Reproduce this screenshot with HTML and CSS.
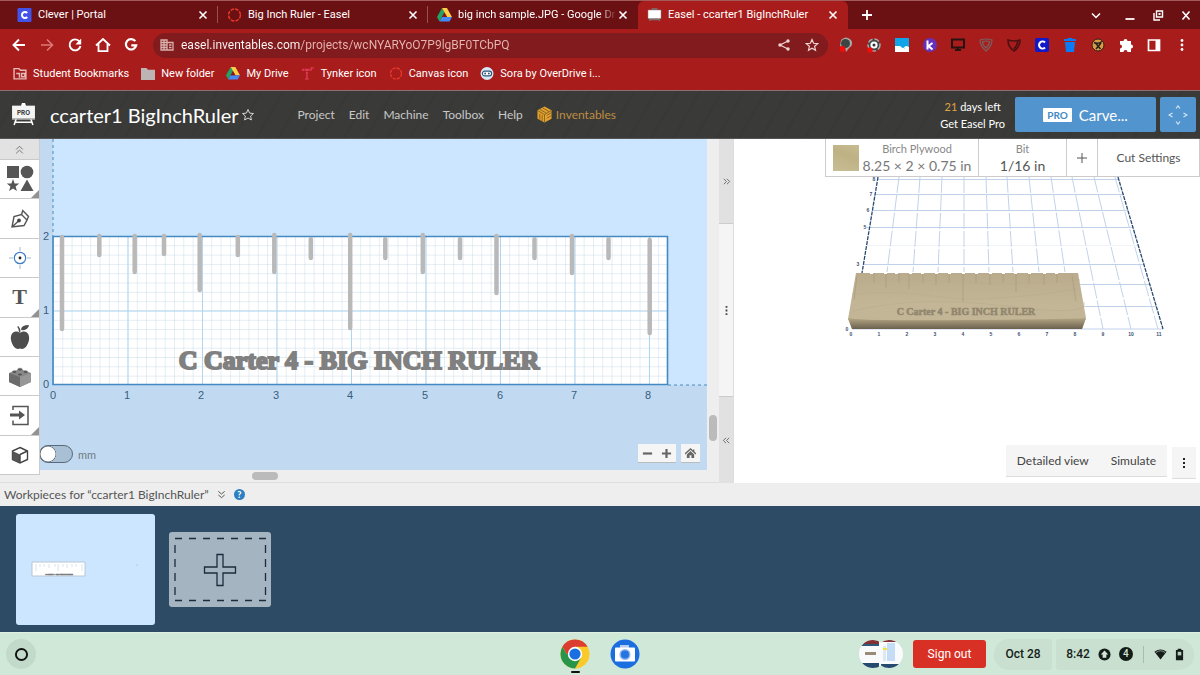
FILE: index.html
```html
<!DOCTYPE html>
<html lang="en">
<head>
<meta charset="utf-8">
<meta name="viewport" content="width=device-width, initial-scale=1">
<title>Easel - ccarter1 BigInchRuler</title>
<link rel="stylesheet" href="styles.css">
</head>
<body>
<svg class="defs" width="0" height="0" aria-hidden="true">
  <symbol id="x" viewBox="0 0 10 10"><path d="M1.5 1.5l7 7M8.5 1.5l-7 7" fill="none" stroke="currentColor" stroke-width="1.6"/></symbol>
  <symbol id="drive" viewBox="0 0 14 13"><path d="M4.700 0L0 8.300l2.300 4.200L7 4z" fill="#1fa463"/><path d="M4.700 0h4.600L14 8.300H9.400z" fill="#ffcf48"/><path d="M2.300 12.500l2.400-4.200H14l-2.300 4.200z" fill="#4688f4"/><path d="M7 4.300L9.300 8.300H4.700z" fill="#8e1518"/></symbol>
  <symbol id="ring" viewBox="0 0 16 16"><circle cx="8" cy="8" r="6.800" fill="none" stroke="#e8392b" stroke-width="1.700" stroke-dasharray="4 1.340"/></symbol>
</svg>

<header class="browser">
  <nav class="tabs" aria-label="Tabs">
    <div class="tab"><svg class="fav" viewBox="0 0 14 14"><rect width="14" height="14" rx="1" fill="#4353e8"/><path d="M9.700 5A3 3 0 1 0 9.700 9" fill="none" stroke="#fff" stroke-width="2"/></svg><span class="tab-title">Clever | Portal</span><button class="close" aria-label="Close tab"><svg><use href="#x"/></svg></button></div>
    <div class="tab"><svg class="fav"><use href="#ring"/></svg><span class="tab-title">Big Inch Ruler - Easel</span><button class="close" aria-label="Close tab"><svg><use href="#x"/></svg></button></div>
    <div class="tab"><svg class="fav"><use href="#drive"/></svg><span class="tab-title fade">big inch sample.JPG - Google Dr</span><button class="close" aria-label="Close tab"><svg><use href="#x"/></svg></button></div>
    <div class="tab active"><svg class="fav" viewBox="0 0 14 14"><path d="M3 10l-1 3M11 10l1 3M2.500 11.500h9M4 1h6" stroke="#777" stroke-width="1.300"/><rect x=".5" y="2" width="13" height="8.500" fill="#fff" stroke="#888" stroke-width=".5"/></svg><span class="tab-title">Easel - ccarter1 BigInchRuler</span><button class="close" aria-label="Close tab"><svg><use href="#x"/></svg></button></div>
    <button class="new-tab" aria-label="New tab"><svg viewBox="0 0 12 12"><path d="M6 1v10M1 6h10" stroke="#fff" stroke-width="1.800"/></svg></button>
    <div class="window-controls">
      <button class="ib search-tabs" aria-label="Search tabs"><svg viewBox="0 0 14 14"><path d="M3 5.500l4 4 4-4" fill="none" stroke="#fff" stroke-width="1.500"/></svg></button>
      <button class="ib" aria-label="Minimize"><svg viewBox="0 0 14 14"><path d="M2.500 11h9" stroke="#fff" stroke-width="1.800"/></svg></button>
      <button class="ib" aria-label="Restore"><svg viewBox="0 0 14 14"><path d="M5.500 3h6v6h-6zM3 5v7h6" fill="none" stroke="#fff" stroke-width="1.400"/><path d="M7.500 5h2v2h-2z" fill="#fff"/></svg></button>
      <button class="ib" aria-label="Close window"><svg viewBox="0 0 14 14"><path d="M3.500 3.500l7 8M10.500 3.500l-7 8" stroke="#fff" stroke-width="1.600"/></svg></button>
    </div>
  </nav>

  <div class="toolbar">
    <button class="ib" aria-label="Back"><svg viewBox="0 0 16 16"><path d="M14 8H3M8 2.500L2.500 8 8 13.500" fill="none" stroke="#fff" stroke-width="1.900"/></svg></button>
    <button class="ib" aria-label="Forward"><svg viewBox="0 0 16 16"><path d="M2 8h11M8 2.500L13.500 8 8 13.500" fill="none" stroke="#dc7974" stroke-width="1.600"/></svg></button>
    <button class="ib" aria-label="Reload"><svg viewBox="0 0 16 16"><path d="M12.500 4.500A5.500 5.500 0 1 0 13.500 9" fill="none" stroke="#fff" stroke-width="1.900"/><path d="M14.200 1.500v6H8.400z" fill="#fff"/></svg></button>
    <button class="ib" aria-label="Home"><svg viewBox="0 0 16 16"><path d="M1 8.500L8 2l7 6.500M3.500 7v7.200h9V7" fill="none" stroke="#fff" stroke-width="1.800"/></svg></button>
    <button class="ib" aria-label="Google"><svg viewBox="0 0 16 16"><path d="M12.300 4.200A5.200 5.200 0 1 0 13.200 8.300H8.300" fill="none" stroke="#fff" stroke-width="2.200"/></svg></button>
    <form class="omnibox">
      <svg viewBox="0 0 14 12"><path d="M1 1h6v10H1zM7 3.500h6V11H7M1 3.500h6M1 6h6M1 8.500h6M4 1v10M9 6h2.500M9 8.500h2.500" fill="none" stroke="#d9b2ae" stroke-width="1.300"/></svg>
      <input aria-label="Address" value="easel.inventables.com/projects/wcNYARYoO7P9lgBF0TCbPQ">
      <button type="button" class="ib" aria-label="Share"><svg viewBox="0 0 14 14"><path d="M11 3L3 7l8 4" fill="none" stroke="#f0d4d1" stroke-width="1.200"/><g fill="#f0d4d1"><circle cx="11" cy="3" r="1.700"/><circle cx="3" cy="7" r="1.700"/><circle cx="11" cy="11" r="1.700"/></g></svg></button>
      <button type="button" class="ib" aria-label="Bookmark"><svg viewBox="0 0 14 14"><path d="M7 1.500l1.600 3.800 4 .3-3 2.700.9 4L7 10.200l-3.500 2.100.9-4-3-2.700 4-.3z" fill="none" stroke="#f0d4d1" stroke-width="1.200"/></svg></button>
    </form>
    <div class="extensions">
      <button class="ib" aria-label="Extension"><svg viewBox="0 0 16 16"><path d="M3 3q5-5 10 0 3 5-2 8l-3 4-1-4-5-2z" fill="#aaa"/><circle cx="7.500" cy="6.500" r="4.500" fill="#3e4441"/><circle cx="4.500" cy="12" r="3" fill="#f40a0a"/></svg></button>
      <button class="ib" aria-label="Extension"><svg viewBox="0 0 16 16"><circle cx="8" cy="8" r="6" fill="#444" stroke="#aaa" stroke-width="1.500" stroke-dasharray="5 2"/><circle cx="8" cy="8" r="3.600" fill="#fff"/><circle cx="8" cy="8" r="1.500" fill="#333"/><circle cx="4" cy="13" r="2.700" fill="#f40a0a"/></svg></button>
      <button class="ib" aria-label="Extension"><svg viewBox="0 0 16 16"><path d="M1 1h14v14H1z" fill="#fff"/><path d="M1 1h14v9l-3-1-2 3-4-3H1z" fill="#10a4e8"/><path d="M9 12q1-3 5-2" fill="none" stroke="#fff"/></svg></button>
      <button class="ib" aria-label="Kami"><svg viewBox="0 0 16 16"><circle cx="8" cy="8" r="7" fill="#6631b8"/><path d="M5.500 3.500v9M10.500 6L6.500 9l4 3.500" fill="none" stroke="#fff" stroke-width="2"/></svg></button>
      <button class="ib" aria-label="Screen"><svg viewBox="0 0 16 16"><path d="M2 2.500h12v8H2zM8 10v3M5 13h6" fill="none" stroke="#281313" stroke-width="2"/></svg></button>
      <button class="ib" aria-label="Extension"><svg viewBox="0 0 16 16"><path d="M2 3q6-2 12 0 0 6-6 11Q2 9 2 3zM4.500 4.500q3.500-1 7 0 0 3-3.500 6.500Q4.500 8 4.500 4.500z" fill="none" stroke="#79605f" stroke-width="1.200"/></svg></button>
      <button class="ib" aria-label="Extension"><svg viewBox="0 0 16 16"><path d="M2 3q6 2 12 0 0 7-6 11Q2 10 2 3zM12 4q-1 5-4 8" fill="none" stroke="#4f1011" stroke-width="1.600"/></svg></button>
      <button class="ib" aria-label="Clever"><svg viewBox="0 0 16 16"><rect x="1" y="1" width="14" height="14" rx="2" fill="#1018c9"/><path d="M11 5.500a3.500 3.500 0 1 0 0 5" fill="none" stroke="#fff" stroke-width="2"/></svg></button>
      <button class="ib" aria-label="Trash"><svg viewBox="0 0 16 16"><path d="M2 2h3l1-1h4l1 1h3v2H2zM3 5h10l-1 10H4z" fill="#0b7bf5"/></svg></button>
      <button class="ib" aria-label="Extension"><svg viewBox="0 0 16 16"><circle cx="8" cy="8" r="6" fill="#d99b43" stroke="#30221b" stroke-width="1"/><path d="M5.500 6l5 6M11 6l-5 6M4 5.500q4 2 8-1" fill="none" stroke="#24201e" stroke-width="1.500"/></svg></button>
      <button class="ib" aria-label="Extensions"><svg viewBox="0 0 16 16"><path d="M2 4h3.500a2 2 0 1 1 4 0H13v3.500a2 2 0 1 1 0 4V15H9.500a2 2 0 0 0-4 0H2v-3.500a2 2 0 0 0 0-4z" fill="#fff"/></svg></button>
      <button class="ib" aria-label="Side panel"><svg viewBox="0 0 16 16"><path d="M2.500 3h11v10.500h-11z" fill="none" stroke="#fff" stroke-width="1.700"/><path d="M9.500 3h4v10h-4z" fill="#fff"/></svg></button>
      <button class="ib" aria-label="Browser menu"><svg viewBox="0 0 16 16" fill="#fff"><circle cx="8" cy="3.500" r="1.400"/><circle cx="8" cy="8" r="1.400"/><circle cx="8" cy="12.500" r="1.400"/></svg></button>
    </div>
  </div>

  <nav class="bookmarks" aria-label="Bookmarks">
    <a href="#"><svg viewBox="0 0 13 12"><path d="M1 1.500h4.500L7 3h5v8H1zM3 6h3v4M8 6h3v3H8z" fill="none" stroke="#e2bcb9" stroke-width="1.300"/></svg>Student Bookmarks</a>
    <a href="#"><svg viewBox="0 0 13 12"><path d="M0 1h5l1.500 1.500H13V12H0z" fill="#bdb5b4"/></svg>New folder</a>
    <a href="#"><svg><use href="#drive"/></svg>My Drive</a>
    <a href="#"><svg viewBox="0 0 13 12"><path d="M1 2.500h9M5.500 2v9M4 11h3M9 1h3" fill="none" stroke="#e13a57" stroke-width="1.700" stroke-dasharray="2 .5"/></svg>Tynker icon</a>
    <a href="#"><svg><use href="#ring"/></svg>Canvas icon</a>
    <a href="#"><svg viewBox="0 0 14 14"><circle cx="7" cy="7" r="7" fill="#d4e8f7"/><rect x="2" y="4.500" width="10" height="5" rx="2.500" fill="#fff" stroke="#315578" stroke-width="1.200"/><circle cx="5" cy="7" r="1" fill="#315578"/><circle cx="9" cy="7" r="1" fill="#315578"/></svg>Sora by OverDrive i...</a>
  </nav>
</header>

<header class="app-header">
  <svg class="logo" viewBox="0 0 24 24"><path d="M12 1v4M5 16l-2 6M19 16l2 6M4 19.500h16" stroke="#fff" stroke-width="1.500"/><path d="M10.500 1h3l1 3h-5z" fill="#fff"/><path d="M1 3.500h22V16H1z" fill="#f4f4f4"/><path d="M1 16h22v1H1z" fill="#bbb"/><text x="12" y="12" text-anchor="middle">PRO</text></svg>
  <h1>ccarter1 BigInchRuler</h1>
  <button class="star" aria-label="Favorite"><svg viewBox="0 0 14 14"><path d="M7 1.500l1.600 3.600 3.900.4-2.900 2.600.8 3.900L7 10l-3.400 2 .8-3.900-2.900-2.600 3.900-.4z" fill="none" stroke="#d5d5d5"/></svg></button>
  <nav class="menu" aria-label="Main">
    <button>Project</button><button>Edit</button><button>Machine</button><button>Toolbox</button><button>Help</button>
    <a href="#"><svg viewBox="0 0 16 18"><path d="M8 .5l7.500 4v9L8 17.500.5 13.500v-9z" fill="#e5a22b"/><path d="M8 9v8M8 9l7-4M8 9L1 5M3 3.500l7 4M6 2l7 4M3 8v6.500M5.500 9.500V16M10.500 10l5-3M10.500 13l5-3" fill="none" stroke="#6c5327" stroke-width=".8"/></svg>Inventables</a>
  </nav>
  <div class="trial"><span><b>21</b> days left</span><a href="#">Get Easel Pro</a></div>
  <button class="carve"><span class="pro">PRO</span>Carve...</button>
  <button class="jog" aria-label="Jog machine"><svg viewBox="0 0 20 20"><path d="M8 3.500L10 1l2 2.500M8 16.500l2 2.500 2-2.500M4.500 8L1 10l3.500 2M15.500 8l3.500 2-3.500 2" fill="none" stroke="#d5e9f8" stroke-width="1.100"/></svg></button>
</header>

<main class="workspace">
  <div class="tools">
    <button class="collapse" aria-label="Collapse tools"><svg viewBox="0 0 10 10"><path d="M2 5l3-3 3 3M2 8.500l3-3 3 3" fill="none" stroke="#666" stroke-width=".8"/></svg></button>
    <button class="more" aria-label="Shapes"><svg viewBox="0 0 28 28" fill="#565656"><path d="M1 1h12v12H1z"/><circle cx="21" cy="7" r="6.300"/><path d="M7 14l1.600 4.400 4.600.1-3.600 3 1.300 4.500L7 23.400 3.100 26l1.300-4.500-3.600-3 4.600-.1zM21 14.500L27.500 26h-13z"/></svg></button>
    <button aria-label="Pen"><svg viewBox="0 0 28 28"><path d="M6 22l2-10.500 7.500-2 5.500 5.500-3 5.500zM15.500 9.500l1.300-4 5.700 6-1.500 3.500M6 22l6.500-6" fill="none" stroke="#555" stroke-width="1.400"/><circle cx="13" cy="15.500" r="1.900" fill="#444"/></svg></button>
    <button aria-label="Drill point"><svg viewBox="0 0 28 28"><circle cx="14" cy="14" r="5.700" fill="none" stroke="#3f7ec5" stroke-width="1.200"/><path d="M14 3v4M14 21v4M3 14h4M21 14h4" stroke="#9bbad8"/><circle cx="14" cy="14" r="1.400" fill="#222"/></svg></button>
    <button class="more text-tool" aria-label="Text">T</button>
    <button aria-label="Icons"><svg viewBox="0 0 28 28" fill="#4d4d4d"><path d="M14 10c6-4 10 1 9 7-1 5-4 9-7 9l-2-.5-2 .5c-3 0-6-4-7-9-1-6 3-11 9-7z"/><path d="M13.800 9.500q0-4-2-6" fill="none" stroke="#4d4d4d" stroke-width="1.500"/><path d="M15 7q0-5 8-5-1 6-8 5z"/></svg></button>
    <button aria-label="Apps"><svg viewBox="0 0 28 28"><path d="M3 11l11-4 11 4v9l-11 5-11-5z" fill="#858585"/><path d="M3 11l11 4v10L3 20z" fill="#6b6b6b"/><path d="M14 15l11-4v9l-11 5z" fill="#979797"/><g fill="#555" stroke="#aaa" stroke-width=".5"><ellipse cx="14" cy="7.500" rx="2.500" ry="1.500"/><ellipse cx="8.500" cy="10" rx="2.500" ry="1.500"/><ellipse cx="19.500" cy="10" rx="2.500" ry="1.500"/><ellipse cx="14" cy="12.500" rx="2.500" ry="1.500"/></g></svg></button>
    <button class="more" aria-label="Import"><svg viewBox="0 0 28 28"><path d="M7 9V5.500h15v18H7v-4" fill="none" stroke="#555" stroke-width="1.500"/><path d="M4 12.500h9V9.500l6 4.500-6 4.500v-3H4z" fill="#555"/></svg></button>
    <button aria-label="3D"><svg viewBox="0 0 28 28"><path d="M14 6.500l7.500 3.500v8.500L14 22l-7.500-3.500V10z" fill="#fff" stroke="#444" stroke-width="1.400"/><path d="M6.500 10L14 13.500V22l-7.500-3.500z" fill="#555"/><path d="M14 13.500l7.500-3.500M14 13.500V22" stroke="#444" stroke-width="1.400"/></svg></button>
  </div>

  <section class="design" aria-label="Design canvas">
    <svg class="plane" viewBox="40 139 667 331" preserveAspectRatio="xMinYMin slice">
      <defs>
        <pattern id="minor" x="53" y="236" width="9.310" height="9.310" patternUnits="userSpaceOnUse"><path d="M0 0V9.310M0 0H9.310" stroke="#c4dae8" stroke-width=".9" fill="none"/></pattern>
        <pattern id="major" x="53" y="236" width="74.500" height="74.500" patternUnits="userSpaceOnUse"><path d="M0 0V74.500M0 0H74.500" stroke="#b0d5ee" stroke-width="2" fill="none"/></pattern>
      </defs>
      <path d="M40 139H1400V1000H40z" fill="#c1daf1"/><path d="M53 139H1400V385H53z" fill="#cce6ff"/>
      <path d="M53 139V236M668 385H707" stroke="#4c8abe" stroke-dasharray="3 3" fill="none"/>
      <path d="M53 236H667.500V385H53z" fill="#fff"/><path d="M53 236H667.500V385H53z" fill="url(#minor)"/><path d="M53 236H667.500V385H53z" fill="url(#major)"/>
      <path d="M53 236.500H667.500V384.500H53z" fill="none" stroke="#4589c3" stroke-width="1.600"/>
      <path class="ticks" d="M62 237V329M99.300 236V255M134.700 236V272M164 236V254M199.700 235V290M237.800 237V255M274.300 235V272M310.800 239V258M350.200 235V328M385.300 239V258M422.800 235V272M460 239V258M496.500 236V293M534.500 239V258M572 236V273M608.500 239V258M649.700 240V333"/>
      <text class="engraving" x="359" y="369" text-anchor="middle">C Carter 4 - BIG INCH RULER</text>
      <g class="ruler"><text x="53" y="399">0</text><text x="127" y="399">1</text><text x="201" y="399">2</text><text x="276" y="399">3</text><text x="350" y="399">4</text><text x="425" y="399">5</text><text x="500" y="399">6</text><text x="574" y="399">7</text><text x="648" y="399">8</text><text x="46" y="388">0</text><text x="46" y="314">1</text><text x="46" y="240">2</text></g>
    </svg>
    <label class="units"><input type="checkbox" role="switch"><span>mm</span></label>
    <div class="zoom">
      <div class="zoom-pair"><button aria-label="Zoom out"><svg viewBox="0 0 12 12"><path d="M1 6h10" stroke="#666" stroke-width="2.400"/></svg></button><button aria-label="Zoom in"><svg viewBox="0 0 12 12"><path d="M1 6h10M6 1v10" stroke="#666" stroke-width="2.400"/></svg></button></div>
      <button aria-label="Fit view"><svg viewBox="0 0 12 12"><path d="M0 6.500L6 1l6 5.500M9.500 1.500V4" fill="none" stroke="#666" stroke-width="1.400"/><path d="M2 7l4-3.700L10 7v4H7V8H5v3H2z" fill="#666"/></svg></button>
    </div>
  </section>
  <div class="scroll-x"><i></i></div>
  <div class="scroll-y"><i></i></div>
  <div class="splitter">
    <button aria-label="Expand canvas"><svg viewBox="0 0 10 10"><path d="M2 2l3 3-3 3M5.500 2l3 3-3 3" fill="none" stroke="#666"/></svg></button>
    <div class="grip"><svg viewBox="0 0 10 10" fill="#444"><path d="M4 0h2v2H4zM4 4h2v2H4zM4 8h2v2H4z"/></svg></div>
    <button aria-label="Expand preview"><svg viewBox="0 0 10 10"><path d="M4.500 2l-3 3 3 3M8 2L5 5l3 3" fill="none" stroke="#666"/></svg></button>
  </div>

  <section class="preview" aria-label="3D preview">
    <svg class="scene" viewBox="734 139 466 344" preserveAspectRatio="xMidYMin meet">
      <defs>
        <linearGradient id="top" x2="0" y2="1"><stop stop-color="#b9ab8b"/><stop offset=".55" stop-color="#c3b697"/><stop offset="1" stop-color="#c2b595"/></linearGradient>
        <linearGradient id="front" x2="0" y2="1"><stop stop-color="#b4a786"/><stop offset="1" stop-color="#6b604d"/></linearGradient>
      </defs>
      <g fill="none" stroke="#b9cde8" stroke-width=".9">
        <path d="M878 179.500H1118M875 194.500H1123M872 210.500H1128M867 227.500H1133M864 264.500H1144M880 284.500H1150M880 306.500H1156M852 329H1163"/>
        <path d="M867 245.500H1139" stroke="#edf2f9"/>
        <path d="M899 177L887 272M920 177L913 272M942 177L938 272M964 177V272M986 177L989 272M1007 177L1013 272M1029 177L1039 272M1051 177L1065 272M1072 177L1103 329M1094 177L1131 329M1115 177L1158 329" stroke-dasharray="16 2"/>
      </g>
      <path d="M878 177L862 273M1118 177L1163 329" fill="none" stroke="#294970" stroke-width="1.300" stroke-dasharray="4 1"/>
      <path d="M856 273H1078L1086 318L1082 329H852L848 319z" fill="url(#top)"/>
      <path d="M848 318Q855 321 967 320T1086 318L1082 329H852z" fill="url(#front)"/>
      <path d="M852 294Q900 290 940 297T1078 289M852 311Q920 295 1005 306T1084 302M858 282Q910 278 960 282T1080 280" fill="none" stroke="#b8ab8b" stroke-width=".6"/>
      <path d="M857 276L854 300M874 274V283M886 274V288M899 274V283M909 274V289M923 274V283M936 274V285M949 274V283M963 274V302M976 274V283M990 274V285M1003 274V283M1016 274V292M1029 274V283M1044 274V285M1057 274V283M1072 276L1076 301" stroke="#aa9d7c" stroke-width=".8"/>
      <path d="M870 273.500h3M884 273.500h3M895 273.500h3M909 273.500h3M921 273.500h3M935 273.500h3M948 273.500h3M962 273.500h3M975 273.500h3M989 273.500h3M1002 273.500h3M1014 273.500h3M1028 273.500h3M1043 273.500h3M1055 273.500h3" stroke="#fff"/>
      <text class="carved" x="966" y="315" text-anchor="middle">C Carter 4 - BIG INCH RULER</text>
      <g class="axis"><text x="851" y="336">0</text><text x="879" y="336">1</text><text x="907" y="336">2</text><text x="935" y="336">3</text><text x="963" y="336">4</text><text x="991" y="336">5</text><text x="1019" y="336">6</text><text x="1047" y="336">7</text><text x="1075" y="336">8</text><text x="1103" y="336">9</text><text x="1131" y="336">10</text><text x="1159" y="336">11</text><text x="847" y="331">0</text><text x="858" y="266">3</text><text x="865" y="229">5</text><text x="868" y="212">6</text><text x="871" y="196">7</text><text x="874" y="181">8</text></g>
    </svg>
    <div class="settings">
      <button class="material"><i class="swatch"></i><span><small>Birch Plywood</small>8.25 × 2 × 0.75 in</span></button>
      <button class="bit"><span><small>Bit</small>1/16 in</span></button>
      <button class="add-bit" aria-label="Add bit"><svg viewBox="0 0 12 12"><path d="M1 6h10M6 1v10" stroke="#555"/></svg></button>
      <button class="cut">Cut Settings</button>
    </div>
    <div class="view-actions">
      <div class="pair"><button>Detailed view</button><button>Simulate</button></div>
      <button class="dots" aria-label="Preview options"><svg viewBox="0 0 10 10" fill="#222"><path d="M4 0h2v2H4zM4 4h2v2H4zM4 8h2v2H4z"/></svg></button>
    </div>
  </section>
</main>

<section class="workpieces">
  <h2>Workpieces for “ccarter1 BigInchRuler” <button aria-label="Collapse workpieces"><svg viewBox="0 0 10 10"><path d="M1.500 1.500l3.500 3 3.500-3M1.500 5.500l3.500 3 3.500-3" fill="none" stroke="#555" stroke-width="1.100"/></svg></button><button class="help" aria-label="Help">?</button></h2>
  <div class="tray">
    <button class="thumb" aria-label="Workpiece 1"><svg viewBox="0 0 139 111"><path d="M16 48h53v14H16z" fill="#fff" stroke="#b8c6d3"/><path d="M20 50v7M24 50v3M28 50v3M33 50v4M39 50v3M42 50v7M47 50v3M51 50v4M56 50v3M60 50v3M66 50v7" stroke="#d4dce3" stroke-width=".8"/><text x="43" y="61" text-anchor="middle">C Carter 4 - BIG INCH RULER</text><circle cx="121" cy="51" r=".6" fill="#9ab"/></svg></button>
    <button class="add" aria-label="Add workpiece"><svg viewBox="0 0 102 75"><path d="M6 6.500H97M6 68.500H97" stroke="#1b2c3c" stroke-width="1.300" stroke-dasharray="7 7"/><path d="M6 13V65M96.500 13V65" stroke="#1b2c3c" stroke-width="1.300" stroke-dasharray="8 6"/><path d="M48 22.500h6v12.500h12.500v6H54v12.500h-6V41H35.500v-6H48z" fill="#a5b4c1" stroke="#1b2c3c" stroke-width="1.300"/></svg></button>
  </div>
</section>

<footer class="shelf">
  <button class="launcher" aria-label="Launcher"><svg viewBox="0 0 14 14"><circle cx="7" cy="7" r="5.200" fill="none" stroke="#111" stroke-width="1.800"/></svg></button>
  <div class="apps">
    <button class="running" aria-label="Chrome"><svg viewBox="0 0 30 30"><circle cx="15" cy="15" r="14.500" fill="#fbc928"/><path d="M2.400 7.800A14.500 14.500 0 0 1 27.600 7.800H15L8.800 18.600z" fill="#dc3d31"/><path d="M2.400 7.800A14.500 14.500 0 0 0 15 29.500l6.200-11L15 15H6.600z" fill="#28954b"/><circle cx="15" cy="15" r="7.200" fill="#fff"/><circle cx="15" cy="15" r="5.600" fill="#1a6fe0"/></svg></button>
    <button aria-label="Camera"><svg viewBox="0 0 30 30"><circle cx="15" cy="15" r="14.500" fill="#1b6ee0"/><path d="M10 6h9v4h-9z" fill="#b8cdec"/><rect x="5" y="8.500" width="20" height="14" rx="1" fill="#fff"/><circle cx="15" cy="15.500" r="5.500" fill="#8cb5ef"/><circle cx="15" cy="15.500" r="4" fill="#2674df"/></svg></button>
  </div>
  <div class="tray-right">
    <button class="recent" aria-label="Recent screenshots"><svg viewBox="0 0 44 28"><defs><clipPath id="pill"><circle cx="14" cy="14" r="14"/><circle cx="30" cy="14" r="14"/></clipPath></defs><g clip-path="url(#pill)"><path d="M0 0h44v28H0z" fill="#f8fafc"/><path d="M0 0h20v4H0zM22 0h22v2H22z" fill="#813033"/><path d="M0 4h20v2H0z" fill="#30577c"/><path d="M0 23h20v5H0zM22 24h22v4H22z" fill="#254a70"/><path d="M6 12h11v3H6z" fill="#998b78"/><path d="M28 3h8v18h-8z" fill="#c4dcf5"/><path d="M24 6h3v15h-3z" fill="#dce9f2"/><path d="M24 8h4v2h-4z" fill="#f3e43c"/></g></svg></button>
    <button class="signout">Sign out</button>
    <button class="date">Oct 28</button>
    <button class="status"><span>8:42</span><svg viewBox="0 0 14 14"><circle cx="7" cy="7" r="6.500" fill="#151d19"/><path d="M7 2.800l4 4.200H9v3.500H5V7H3z" fill="#d0e7d7"/></svg><span class="count">4</span><i></i><svg viewBox="0 0 14 14"><path d="M.5 4Q7-1 13.500 4L7 12.500z" fill="#151d19"/><path d="M2 5Q7 1 12 5" fill="none" stroke="#8fa098"/></svg><svg class="battery" viewBox="0 0 10 14"><path d="M3 .5h4V2h2v11.500H1V2h2z" fill="#151d19"/><path d="M3 4h4v4H3z" fill="#b8cfc0"/></svg></button>
  </div>
</footer>
</body>
</html>
```
FILE: styles.css
```css
* { box-sizing: border-box; }
body { margin: 0; min-height: 100vh; display: flex; flex-direction: column; font-family: Lato, sans-serif; color: #555; background: #eee; }
button, input { font: inherit; color: inherit; border: 0; margin: 0; padding: 0; background: none; }
button { cursor: pointer; display: flex; align-items: center; justify-content: center; }
a { color: inherit; text-decoration: none; }
svg { display: block; flex: none; }
.defs { position: absolute; }

.browser { background: #a81c1c; color: #fff; font-family: Roboto, sans-serif; border-bottom: 1px solid #8b7075; }
.tabs { height: 29px; display: flex; padding: 0 0 1px 8px; background: #6b1113; border-top: 1px solid #a45a5a; }
.tab { flex: 0 1 210px; min-width: 0; display: flex; align-items: center; gap: 6px; padding: 0 9px 0 9px; font-size: 11px; border-right: 1px solid transparent; }
.tab:nth-child(-n+2) { border-image: linear-gradient(transparent 20%, #9b5152 20%, #9b5152 80%, transparent 80%) 1; }
.tab.active { background: #a81c1c; border-radius: 6px 6px 0 0; margin-bottom: -1px; padding-bottom: 1px; }
.fav { width: 15px; height: 14px; }
.tab-title { flex: 1; overflow: hidden; white-space: nowrap; }
.fade { -webkit-mask-image: linear-gradient(to right, #000 88%, transparent); mask-image: linear-gradient(to right, #000 88%, transparent); }
.close { margin-left: -5px; }
.close svg { width: 10px; height: 10px; }
.new-tab { width: 38px; }
.new-tab svg { width: 12px; height: 12px; }
.window-controls { display: flex; margin-left: auto; }
.ib { width: 28px; flex: none; }
.ib svg { width: 14px; height: 14px; }
.search-tabs { margin-right: 6px; }
.toolbar { height: 32px; display: flex; align-items: center; padding: 0 5px; }
.toolbar .ib { height: 28px; }
.toolbar > .ib svg, .extensions svg { width: 16px; height: 16px; }
.omnibox { flex: 1; min-width: 0; height: 25px; margin-left: 8px; padding: 0 2px 0 7px; display: flex; align-items: center; gap: 7px; background: #821b1d; border-radius: 13px; }
.omnibox > svg { width: 14px; height: 12px; }
.omnibox input { flex: 1; min-width: 0; font-size: 12px; color: transparent; background: linear-gradient(to right, #fff 119px, #e8b8b4 119px); -webkit-background-clip: text; background-clip: text; }
.omnibox .ib + .ib { margin-left: -7px; }
.extensions { display: flex; margin-left: 4px; }
.toolbar .extensions { margin-right: -1px; }
.bookmarks { height: 29px; padding: 0 0 4px 13px; display: flex; align-items: center; gap: 12px; font-size: 11px; }
.bookmarks a { display: flex; align-items: center; gap: 6px; white-space: nowrap; }
.bookmarks svg { width: 14px; height: 13px; }

.app-header { height: 48px; display: flex; align-items: center; padding: 0 4px 0 11px; color: #eee; background: #3a3b38 repeating-linear-gradient(120deg, transparent 0 16px, #383936 16px 19px); border-bottom: 1px solid #555; }
.logo { width: 25px; height: 25px; }
.logo text { font: bold 6px Inter, sans-serif; fill: #333; }
.app-header h1 { margin: 0 0 0 14px; font-size: 20px; font-weight: 400; color: #fff; white-space: nowrap; }
.star svg { width: 14px; height: 14px; }
.star { margin-left: 2px; }
.menu { display: flex; align-items: center; gap: 14px; margin-left: 43px; font-size: 12px; color: #c8c8c8; white-space: nowrap; }
.menu a { display: flex; align-items: center; gap: 4px; color: #bd8c43; }
.menu a svg { width: 15px; height: 17px; }
.trial { margin-left: auto; display: flex; flex-direction: column; align-items: center; font-size: 11px; line-height: 17px; white-space: nowrap; color: #fff; }
.trial b { font-weight: 400; color: #e4a343; }
.carve { width: 141px; height: 35px; margin-left: 10px; gap: 7px; background: #5294ce; border-radius: 2px; color: #fff; font-size: 15px; }
.pro { background: #fff; color: #4388c4; font-size: 10px; font-weight: 700; line-height: 14px; padding: 0 4px; border-radius: 1px; }
.jog { width: 36px; height: 35px; margin: 0 0 0 4px; background: #5294ce; border-radius: 2px; }
.jog svg { width: 20px; height: 20px; }

.workspace { min-height: 344px; flex: 1; display: grid; grid-template-columns: 40px minmax(0, 667fr) 12px 15px minmax(0, 466fr); grid-template-rows: 1fr 13px; background: #eee; }
.tools { z-index: 1; grid-row: 1 / 3; grid-column: 1; display: grid; grid-template-rows: 21px repeat(8, 1fr); margin-bottom: 8px; border-right: 1px solid #ccc; }
.tools button { background: #fff; border-bottom: 1px solid #c9c9c9; position: relative; }
.tools .collapse { background: #e2e2e2; }
.tools svg { width: 28px; height: 28px; }
.tools .collapse svg { width: 11px; height: 11px; }
.more::after { content: ""; position: absolute; right: 0; bottom: 0; border: 4px solid transparent; border-right-color: #929292; border-bottom-color: #929292; }
.tools .text-tool { font: bold 22px "Liberation Serif", serif; color: #555; }
.design { grid-column: 2; grid-row: 1; position: relative; overflow: hidden; }
.plane { position: absolute; width: 100%; height: 100%; }
.ticks { fill: none; stroke: #b9b9b9; stroke-width: 4.5; stroke-linecap: round; }
.engraving { font: bold 26px "Liberation Serif", serif; fill: #808080; stroke: #808080; stroke-width: 2px; }
.ruler { font: 11px "Liberation Sans", sans-serif; fill: #395d80; text-anchor: middle; }
.units { position: absolute; left: -1px; bottom: 7px; display: flex; align-items: center; gap: 5px; font-size: 11px; color: #707b84; }
.units input { appearance: none; width: 34px; height: 18px; border: 1px solid #59697a; border-radius: 9px; background: radial-gradient(circle at 8px 8px, #fff 7px, #59697a 8px, #a9bfd3 8px); }
.zoom { position: absolute; right: 7px; bottom: 7px; display: flex; gap: 5px; }
.zoom-pair, .zoom > button { background: #f5f5f5; height: 19px; display: flex; border-bottom: 1px solid #bbb; }
.zoom button { width: 19px; }
.zoom svg { width: 11px; height: 11px; }
.scroll-x { grid-column: 1 / 4; grid-row: 2; display: flex; align-items: center; border-bottom: 1px solid #ddd; }
.scroll-x i { width: 26px; height: 8px; margin-left: 35%; border-radius: 4px; background: #bbb; }
.scroll-y { grid-column: 3; grid-row: 1; display: flex; align-items: flex-end; justify-content: center; }
.scroll-y i { width: 8px; height: 26px; margin-bottom: 29px; border-radius: 4px; background: #bbb; }
.splitter { grid-column: 4; grid-row: 1 / 3; display: grid; grid-template-rows: 84fr 174fr 86fr; background: #e1e1e1; border-right: 1px solid #ddd; }
.splitter svg { width: 9px; height: 9px; }
.grip { display: flex; align-items: center; justify-content: center; background: #f5f5f5; border-block: 1px solid #ccc; }
.preview { grid-column: 5; grid-row: 1 / 3; position: relative; background: #fff; overflow: hidden; }
.scene { position: absolute; width: 100%; height: 100%; }
.carved { font: bold 10px "Liberation Serif", serif; fill: #91866d; stroke: #91866d; stroke-width: .5px; }
.axis { font: bold 5px "Liberation Sans", sans-serif; fill: #3c5270; text-anchor: middle; }
.settings { position: absolute; top: 0; right: 0; height: 38px; display: flex; background: #fff; border: 1px solid #ccc; border-top: 0; white-space: nowrap; }
.settings button { border-right: 1px solid #ccc; font-size: 13px; }
.settings button:last-child { border: 0; }
.settings small { display: block; font-size: 11px; line-height: 16px; color: #888; }
.settings .material { width: 153px; gap: 4px; color: #777; }
.settings .bit { width: 88px; }
.settings .add-bit { width: 31px; }
.settings .cut { width: 101px; font-size: 12px; }
.settings span { line-height: 18px; font-size: 14px; }
.add-bit svg { width: 12px; height: 12px; }
.swatch { width: 26px; height: 26px; background: linear-gradient(20deg, #c8bd94, #beb184 60%, #c8bc93); }
.view-actions { position: absolute; right: 4px; bottom: 4px; display: flex; align-items: flex-end; gap: 5px; font-size: 12px; color: #444; }
.pair { display: flex; margin-bottom: 2px; }
.pair button, .dots { background: #f5f5f5; height: 32px; padding: 0 11px; border-bottom: 1px solid #ddd; }
.view-actions .dots { width: 24px; padding: 0; }
.dots svg { width: 10px; height: 10px; }

.workpieces h2 { height: 23px; margin: 0; padding: 0 4px; display: flex; align-items: center; font-size: 12px; font-weight: 400; white-space: nowrap; }
.workpieces h2 svg { width: 9px; height: 9px; margin-left: 8px; }
.workpieces .help { width: 11px; height: 11px; margin-left: 8px; border-radius: 50%; background: #2d7fc4; color: #fff; font-size: 9px; font-weight: 900; }
.tray { min-height: 126px; display: flex; align-items: center; gap: 14px; padding: 0 16px; background: #2d4b65; }
.thumb { width: 139px; height: 111px; background: #cce6ff; border-radius: 3px; }
.thumb text { font: bold 2px "Liberation Serif", serif; fill: #555; stroke: #777; stroke-width: .5px; }
.add { width: 102px; height: 75px; background: #a5b4c1; border-radius: 3px; }

.shelf { height: 43px; display: grid; grid-template-columns: 1fr auto 1fr; align-items: center; padding: 0 6px; background: #d0e8d7; font-family: Roboto, sans-serif; font-size: 12px; color: #151d19; border-top: 1px solid #e1f0e5; }
.launcher { width: 30px; height: 30px; border-radius: 50%; background: #c2dac9; }
.launcher svg { width: 15px; height: 15px; }
.apps { display: flex; gap: 20px; }
.apps svg { width: 30px; height: 30px; }
.running { position: relative; }
.running::after { content: ""; position: absolute; bottom: -4px; width: 9px; height: 2px; background: #111; border-radius: 1px; }
.tray-right { display: flex; align-items: center; justify-content: flex-end; }
.recent svg { width: 44px; height: 28px; }
.signout { width: 73px; height: 28px; margin: 0 8px 0 10px; border-radius: 3px; background: #d93025; color: #fff; }
.date, .status { height: 31px; background: #c9e0d0; font-weight: 500; }
.date { width: 58px; margin-right: 4px; border-radius: 15px 3px 3px 15px; }
.status { width: 138px; gap: 8px; border-radius: 3px 15px 15px 3px; }
.status svg { width: 13px; height: 13px; }
.status .battery { width: 9px; }
.count { width: 14px; height: 14px; line-height: 14px; border-radius: 50%; background: #151d19; color: #d0e7d7; font-size: 10px; }
.status i { width: 1px; height: 17px; margin: 0 2px; background: #a8bdaf; }
```
